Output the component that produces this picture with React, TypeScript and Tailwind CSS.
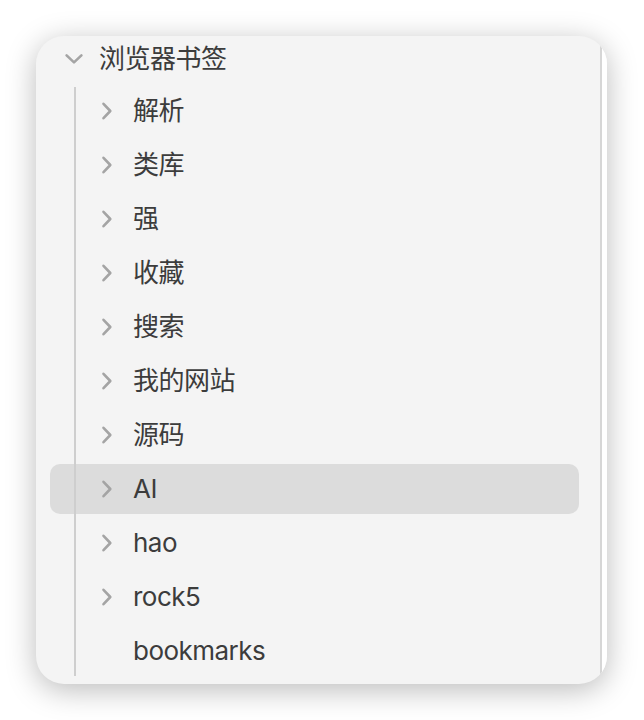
import React from 'react';

const items = ['解析', '类库', '强', '收藏', '搜索', '我的网站', '源码', 'AI', 'hao', 'rock5', 'bookmarks'];

const ChevronRight = () => (
  <svg width="20" height="20" viewBox="0 0 20 20" fill="none">
    <path d="M6.5 2.8 L13.3 10 L6.5 17.2" stroke="#a4a4a4" strokeWidth="2.6" strokeLinecap="round" strokeLinejoin="round" />
  </svg>
);

const ChevronDown = () => (
  <svg width="20" height="20" viewBox="0 0 20 20" fill="none">
    <path d="M2.6 6.4 L10 13.4 L17.4 6.4" stroke="#a4a4a4" strokeWidth="2.6" strokeLinecap="round" strokeLinejoin="round" />
  </svg>
);

const App = () => {
  return (
    <div
      className="min-h-[720px] w-[644px] bg-white pl-[36px] pt-[36px]"
      style={{ fontFamily: 'Inter, "Noto Sans CJK SC", sans-serif' }}
    >
      <div className="flex h-[648px] w-[571px] overflow-hidden rounded-[28px] bg-[#f4f4f4] shadow-[0_6px_30px_rgba(0,0,0,0.27)]">
        <div className="flex-1">
          {/* Root folder */}
          <div className="flex h-[46px] items-center pl-[28px]">
            <ChevronDown />
            <span className="ml-[15px] text-[26px] leading-none tracking-[-0.02em] text-[#3c3c3c]">浏览器书签</span>
          </div>

          {/* Children */}
          <div className="relative ml-[14px] mr-[21px] mt-[4px] flex flex-col gap-[4px]">
            {items.map((name) => (
              <div
                key={name}
                className={`flex h-[50px] items-center rounded-[10px] pl-[47px] ${name === 'AI' ? 'bg-[#dcdcdc]' : ''}`}
              >
                {name === 'bookmarks' ? <div className="h-[20px] w-[20px]" /> : <ChevronRight />}
                <span className="ml-[16px] text-[26px] leading-none tracking-[-0.02em] text-[#3c3c3c]">{name}</span>
              </div>
            ))}
            <div className="absolute bottom-0 left-[24px] top-[1px] w-[2px] bg-[#cecece]" />
          </div>
        </div>

        {/* Scrollbar track */}
        <div className="w-[7px] border-l-2 border-[#d6d6d6] bg-white" />
      </div>
    </div>
  );
};

export default App;
